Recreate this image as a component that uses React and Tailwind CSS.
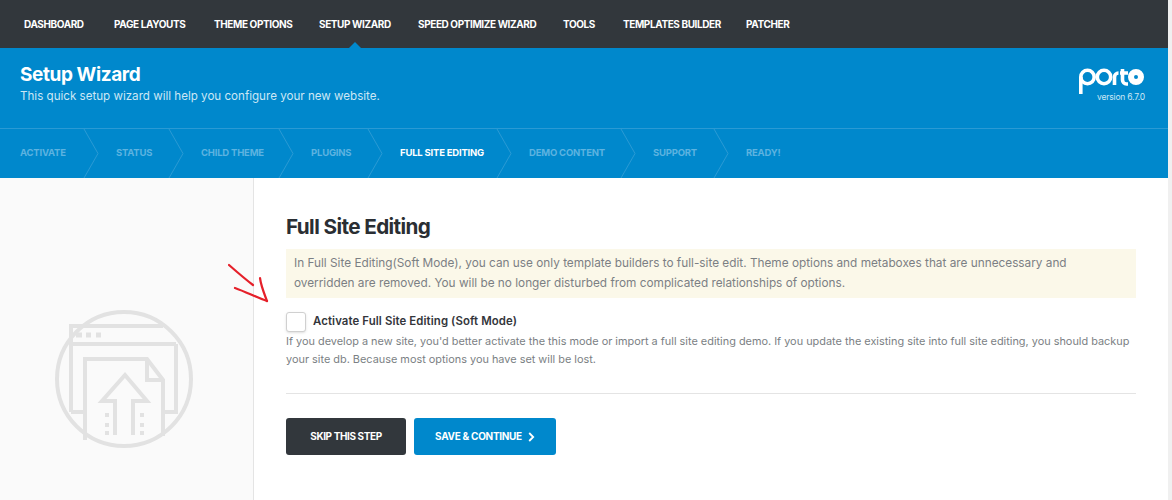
const NAV = [
  { label: 'DASHBOARD', w: 'w-[62px]' },
  { label: 'PAGE LAYOUTS', w: 'w-[72px]' },
  { label: 'THEME OPTIONS', w: 'w-[77px]' },
  { label: 'SETUP WIZARD', w: 'w-[71px]' },
  { label: 'SPEED OPTIMIZE WIZARD', w: 'w-[117px]' },
  { label: 'TOOLS', w: 'w-[32px]' },
  { label: 'TEMPLATES BUILDER', w: 'w-[95px]' },
  { label: 'PATCHER', w: 'w-[45px]' },
];

const STEPS = [
  { label: 'ACTIVATE', w: 'w-[96px]' },
  { label: 'STATUS', w: 'w-[85px]' },
  { label: 'CHILD THEME', w: 'w-[110px]' },
  { label: 'PLUGINS', w: 'w-[89px]' },
  { label: 'FULL SITE EDITING', w: 'w-[129px]', active: true },
  { label: 'DEMO CONTENT', w: 'w-[124px]' },
  { label: 'SUPPORT', w: 'w-[93px]' },
  { label: 'READY!', w: 'w-[60px]', last: true },
];

const PortoLogo = () => (
  <svg width="65" height="26" viewBox="0 0 65 26" fill="none" stroke="#fff" strokeWidth="3.6">
    <circle cx="8.5" cy="9" r="6.7" />
    <path d="M1.8 9v17" />
    <circle cx="25" cy="9" r="6.7" />
    <path d="M35.5 17V9a4 4 0 0 1 4-4" />
    <path d="M43.5 1v11a4 4 0 0 0 4 4h1.5M41 5h8" />
    <circle cx="57" cy="9" r="5" strokeWidth="6" />
  </svg>
);

const WizardArt = () => (
  <svg width="138" height="138" viewBox="0 0 138 138" fill="none" stroke="#e2e2e2" strokeWidth="4">
    <circle cx="69" cy="69" r="67" />
    <path d="M16 102V16h92M16 34h105M121 34v68h-11M16 102h13" />
    <path d="M30 130V49h62l16 21v56M92 49v21h16" />
    <path d="M60 125V91H47l23-26 22 26H78v34" />
    <path d="M21 25h6M31 25h5M41 25h5" strokeWidth="5" />
    <path d="M50 105h4M50 115h4M50 123h4M85 105h4M85 115h4M85 123h4" strokeWidth="4" />
  </svg>
);

export default function App() {
  return (
    <div className="w-[1172px] h-[500px] overflow-hidden bg-[#f0f0f0] font-['Inter',sans-serif]">
      <div className="w-[1168px] h-[500px] bg-white flex flex-col">
        <nav className="h-[48px] bg-[#32373c] flex items-center pl-6 gap-[28px] shrink-0">
          {NAV.map((item) => (
            <a key={item.label} className={`${item.w} relative h-[48px] flex items-center whitespace-nowrap text-white text-[10px] font-bold tracking-[-0.4px]`}>
              {item.label}
              {item.label === 'SETUP WIZARD' && (
                <span className="absolute bottom-0 left-1/2 -ml-[6px] w-0 h-0 border-x-[6px] border-x-transparent border-b-[6px] border-b-[#0088cc]" />
              )}
            </a>
          ))}
        </nav>

        <header className="h-[80px] bg-[#0088cc] flex justify-between px-5 pt-[15px] shrink-0">
          <div>
            <h1 className="text-white text-[19px] leading-[24px] font-bold tracking-[-0.4px]">Setup Wizard</h1>
            <p className="text-[#cce7f5] text-[11.6px] leading-[14px] mt-[2px]">This quick setup wizard will help you configure your new website.</p>
          </div>
          <div className="flex flex-col items-end pt-[5px] pr-[4px]">
            <PortoLogo />
            <span className="text-[#cce7f5] text-[8.5px] leading-[10px] -mr-[1px] -mt-[2px] tracking-[-0.2px]">version 6.7.0</span>
          </div>
        </header>

        <div className="h-[50px] bg-[#0088cc] border-t border-[#2a9ad4] flex items-center pl-5 shrink-0">
          {STEPS.map((s) => (
            <div key={s.label} className={`${s.w} h-[49px] relative flex items-center shrink-0`}>
              <span className={`whitespace-nowrap text-[9.5px] font-bold tracking-[-0.2px] ${s.active ? 'text-white' : 'text-[#5db3e0]'}`}>{s.label}</span>
              {!s.last && (
                <svg width="16" height="49" viewBox="0 0 16 49" fill="none" stroke="#2a9ad4" className="absolute right-[17px] top-0">
                  <path d="M1 0l14 24.5L1 49" />
                </svg>
              )}
            </div>
          ))}
        </div>

        <main className="flex-1 flex min-h-0">
          <aside className="w-[254px] shrink-0 bg-[#fafafa] border-r border-[#e4e4e4] flex items-start pt-[132px] pl-[55px]">
            <WizardArt />
          </aside>
          <section className="relative flex-1 pl-8 pr-8 pt-[35px]">
            <h2 className="text-[#2a2e33] text-[20.7px] leading-[28px] font-bold tracking-[-0.6px]">Full Site Editing</h2>
            <div className="mt-[8px] h-[49px] bg-[#fbf8e9] pl-2 pr-[40px] py-[4px] text-[#7b7f84] text-[11.8px] leading-[20px]">
              In Full Site Editing(Soft Mode), you can use only template builders to full-site edit. Theme options and metaboxes that are unnecessary and overridden are removed. You will be no longer disturbed from complicated relationships of options.
            </div>
            <label className="mt-[14px] flex items-center gap-[7px]">
              <span className="w-[20px] h-[20px] rounded-[3px] border border-[#d0d0d0] bg-white shadow-sm" />
              <span className="text-[#33363b] text-[11.4px] font-semibold tracking-[0.1px]">Activate Full Site Editing (Soft Mode)</span>
            </label>
            <p className="text-[#7b7f84] text-[10.9px] leading-[18px]">
              If you develop a new site, you'd better activate the this mode or import a full site editing demo. If you update the existing site into full site editing, you should backup your site db. Because most options you have set will be lost.
            </p>
            <hr className="mt-[25px] border-[#e4e4e4]" />
            <div className="mt-[24px] flex gap-2">
              <button className="w-[120px] h-[37px] rounded-[3px] bg-[#32373c] text-white text-[10px] font-bold tracking-[-0.4px]">SKIP THIS STEP</button>
              <button className="w-[142px] h-[37px] rounded-[3px] bg-[#0088cc] text-white text-[10px] font-bold tracking-[-0.3px] flex items-center justify-center gap-[6px]">
                SAVE &amp; CONTINUE
                <svg width="7" height="10" viewBox="0 0 7 10" fill="none" stroke="#fff" strokeWidth="1.8"><path d="M1.2 1l4 4-4 4" /></svg>
              </button>
            </div>
            <svg width="46" height="42" viewBox="0 0 46 42" fill="none" stroke="#e5202a" strokeWidth="2.2" strokeLinecap="round" className="absolute left-[-26px] top-[83px]">
              <path d="M1 4c8 7 16 14 24 20" />
              <path d="M7 27c11 4 21 9 32 13" />
              <path d="M32 17c1 8 4 15 7 23" />
            </svg>
          </section>
        </main>
      </div>
    </div>
  );
}
